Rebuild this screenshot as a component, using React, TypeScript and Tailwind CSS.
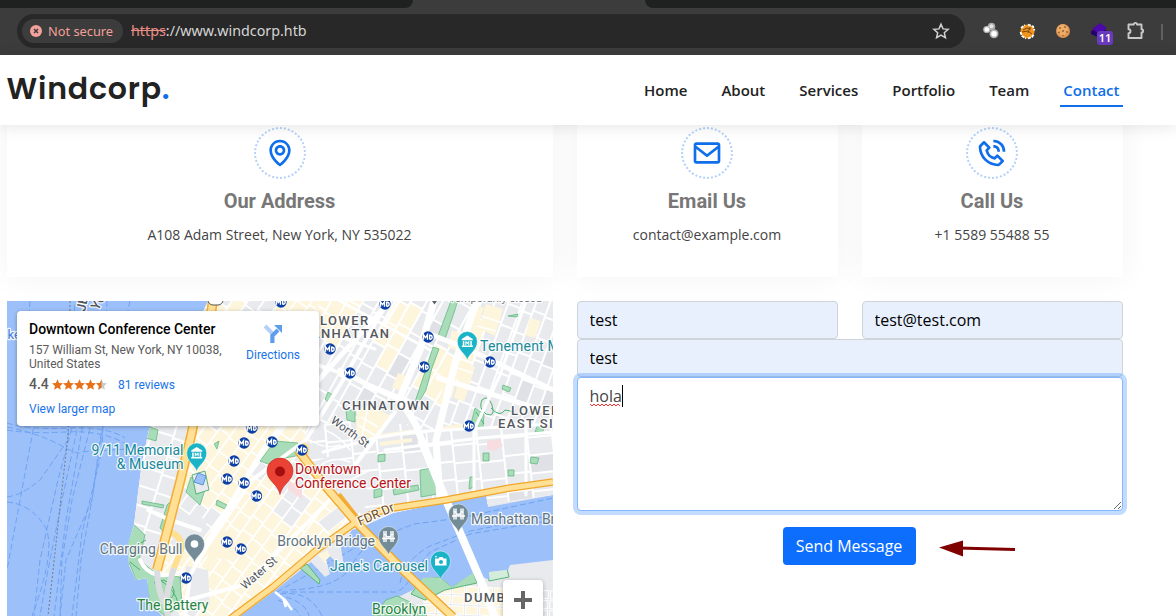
import React from "react";
import { BiEnvelope, BiMap, BiPhoneCall } from "react-icons/bi";

/* ---------- Browser toolbar ---------- */

function BrowserBar() {
  return (
    <div className="h-[55px] shrink-0 bg-[#3c3c3c]">
      <div className="flex h-2">
        <div className="w-[413px] rounded-br-lg bg-[#1f2020]" />
        <div className="w-[232px]" />
        <div className="flex-1 rounded-bl-lg bg-[#1f2020]" />
      </div>
      <div className="flex h-[47px] items-center pl-[17px]">
        <div className="mb-px flex h-[34px] w-[948px] items-center rounded-full bg-[#282828] pl-[5px] pr-[15px]">
          <div className="flex h-6 w-[101px] items-center rounded-full bg-[#3c3c3c] pl-2">
            <svg width="12" height="12" viewBox="0 0 12 12">
              <circle cx="6" cy="6" r="6" fill="#f2a29a" />
              <path d="M4 4l4 4M8 4l-4 4" stroke="#3c3c3c" strokeWidth="1.5" />
            </svg>
            <span className="ml-1.5 whitespace-nowrap pt-px font-['Noto_Sans',sans-serif] text-[12.800px] text-[#f0a098]">Not secure</span>
          </div>
          <div className="ml-2 flex-1 font-['Noto_Sans',sans-serif] text-[14.300px] text-[#d5d5d5]">
            <span className="text-[#e98d85] line-through">https</span>://www.windcorp.htb
          </div>
          <svg width="18" height="18" viewBox="0 0 24 24" fill="none" stroke="#d0d0d0" strokeWidth="2">
            <path d="M12 3l2.7 6.2 6.8.6-5.100 4.500 1.500 6.700L12 17.500 6.100 21l1.500-6.700L2.500 9.800l6.800-.6z" />
          </svg>
        </div>
        <svg className="mb-px ml-[17px]" width="18" height="18" viewBox="0 0 18 18">
          <circle cx="9.500" cy="4.500" r="3.800" fill="#a8a8a8" />
          <circle cx="4.800" cy="7.500" r="3.600" fill="#bdbdbd" />
          <circle cx="12" cy="11.800" r="4.500" fill="#b2b2b2" />
          <circle cx="9.500" cy="4.300" r="2" fill="#e5e5e5" />
          <circle cx="4.800" cy="7.500" r="2.300" fill="#fff" />
          <circle cx="12" cy="11.800" r="2.800" fill="#fff" />
        </svg>
        <svg className="mb-px ml-[19px]" width="17" height="17" viewBox="0 0 17 17">
          <circle cx="8.500" cy="8.500" r="7" fill="#ef941d" />
          <path d="M2 5l4-3M1.500 9l1.500 4 4 2.500M9 1.500l5 2 1.500 4M9 15.500l4-1.500 2-3" fill="none" stroke="#fff" strokeWidth="1.800" strokeDasharray="3 1" />
          <path d="M4 7l4-2 4 1M3 9l6-1 4 3M11 4l-2 6" fill="none" stroke="#7a450f" strokeWidth="1" />
        </svg>
        <svg className="mb-px ml-[19px]" width="16" height="16" viewBox="0 0 16 16">
          <circle cx="8" cy="8" r="7" fill="#dd9550" />
          <circle cx="7.500" cy="7" r="5.700" fill="#ecab66" />
          <g fill="#96602f">
            <circle cx="5" cy="5" r=".9" /><circle cx="10" cy="4" r=".9" /><circle cx="8" cy="8" r="1" />
            <circle cx="4" cy="9.500" r=".9" /><circle cx="12" cy="9" r=".9" /><circle cx="8" cy="12.500" r=".8" />
          </g>
        </svg>
        <div className="relative mb-px ml-5 size-5">
          <svg width="20" height="20" viewBox="0 0 20 20">
            <path d="M0 10l9-5 7 5-7 7-9-4z" fill="#250069" />
            <path d="M1 8l8-6 7 5-7 6z" fill="#4c08a8" />
          </svg>
          <span className="absolute left-[6px] top-[10px] flex h-[14px] w-4 items-center justify-center rounded-[3px] bg-[#693abb] font-['Noto_Sans',sans-serif] text-[11px] font-semibold text-white">11</span>
        </div>
        <svg className="mb-px ml-[15px]" width="20" height="20" viewBox="0 0 20 20" fill="none" stroke="#c9c9c9" strokeWidth="1.900" strokeLinejoin="round">
          <path d="M2.500 3.500h5.300a1.600 1.600 0 013.200 0h4.500v4.800a1.600 1.600 0 010 3.200v5.500h-13v-4.800a2 2 0 000-4z" />
        </svg>
        <div className="ml-[15px] h-4 w-0.5 bg-[#606060]" />
      </div>
    </div>
  );
}

/* ---------- Site header ---------- */

const links = ["Home", "About", "Services", "Portfolio", "Team", "Contact"];

function Header() {
  return (
    <header className="relative z-10 flex h-[70px] shrink-0 items-center justify-between bg-white pl-[6.500px] pr-[53.500px] shadow-[0_2px_15px_rgba(0,0,0,0.1)]">
      <div className="flex h-[70px] items-center pb-[3px] font-[Poppins,Inter,sans-serif] text-[30px] font-semibold tracking-[0.8px] text-[#222]">
        Windcorp<span className="text-[#106eea]">.</span>
      </div>
      <nav className="mt-0.5 flex gap-7 font-['Open_Sans',sans-serif] text-[15px] font-semibold text-[#222]">
        {links.map((l) => (
          <a key={l} className={l === "Contact" ? "flex h-[31px] items-center border-b-2 border-[#106eea] px-[3px] text-[#106eea]" : "flex h-[31px] items-center border-b-2 border-transparent px-[3px]"}>
            {l}
          </a>
        ))}
      </nav>
    </header>
  );
}

/* ---------- Info cards ---------- */

function InfoCard({ icon, title, text }: { icon: React.ReactNode; title: string; text: string }) {
  return (
    <div className="flex h-[172px] flex-col items-center bg-white pt-[22px] pr-px shadow-[0_0_30px_rgba(0,0,0,0.05)]">
      <div className="flex size-[52px] shrink-0 items-center justify-center rounded-full border-2 border-dotted border-[#b3d1fa] text-[32px] text-[#106eea]">
        {icon}
      </div>
      <h3 className="mt-[10px] font-[Roboto,sans-serif] text-[20px] font-bold leading-6 text-[#777]">{title}</h3>
      <p className="mt-[11px] font-['Open_Sans',sans-serif] text-[14px] leading-[21px] text-[#444]">{text}</p>
    </div>
  );
}

/* ---------- Map ---------- */

function rnd(a: number, b: number) {
  const v = Math.sin(a * 127.1 + b * 311.7) * 43758.5453;
  return v - Math.floor(v);
}

type GridProps = { clip: string; cx: number; cy: number; angle: number; w: number; h: number; bw: number; bh: number; gap: number; cream: number };

function Blocks({ clip, cx, cy, angle, w, h, bw, bh, gap, cream }: GridProps) {
  const out: React.ReactNode[] = [];
  const nx = Math.ceil(w / bw);
  const ny = Math.ceil(h / bh);
  for (let i = 0; i < nx; i++) {
    for (let j = 0; j < ny; j++) {
      const c = rnd(Math.floor(i / 2) + cx, Math.floor(j / 3) + cy) < cream;
      const fill = c ? (rnd(i, j) < 0.85 ? "#fdf5dc" : "#e8eaed") : rnd(j + 3, i) < 0.06 ? "#dfe1e6" : "#e8eaed";
      out.push(
        <rect key={`${i}-${j}`} x={cx - w / 2 + i * bw} y={cy - h / 2 + j * bh + (i % 3) * 2} width={bw - gap} height={bh - gap} fill={fill} />
      );
    }
  }
  return (
    <g clipPath={`url(#${clip})`}>
      <rect x="0" y="290" width="560" height="330" fill="#fff" />
      <g transform={`rotate(${angle} ${cx} ${cy})`}>{out}</g>
    </g>
  );
}

const subways: [number, number][] = [
  [281, 302], [385, 304], [428, 337], [330, 349], [350, 373], [424, 367], [490, 362], [469, 426], [272, 442], [302, 450],
  [252, 428], [244, 443], [234, 461], [227, 479], [244, 483], [256.5, 496], [227, 542], [241, 549], [186, 578],
];

function Pin({ x, y, color, kind }: { x: number; y: number; color: string; kind: string }) {
  return (
    <g transform={`translate(${x} ${y})`}>
      <path d="M0 18.500C-1.500 12-10 9-10 0a10 10 0 0120 0C10 9 1.500 12 0 18.500z" fill={color} stroke="#fff" strokeOpacity=".55" strokeWidth=".8" />
      {kind === "dot" && <circle r="3.800" fill="#fff" />}
      {kind === "museum" && <path d="M-5.500-2.500L0-6l5.500 3.500v1.300H-5.500zM-4.500-.5h1.500V4h-1.500zM3-.5h1.500V4H3zM-5.500 4h11v1.500h-11zM-2 3.500V-.3h.9L0 1l1.100-1.300H2v3.800H1V1.600L0 2.700-1 1.600v1.900z" fill="#fff" />}
      {kind === "bridge" && <path d="M-4.500-5.500v11M-2.500-5.500v11M2.500-5.500v11M4.500-5.500v11M-6.500 2h13M-4.500-2h2M2.500-2h2M-2.500-1Q0 2 2.500-1" stroke="#fff" strokeWidth="1.400" fill="none" />}
      {kind === "camera" && (
        <>
          <path d="M-5.500-2.500H-2L-1-4h3l1 1.500h3v7h-11.500z" fill="#fff" />
          <circle cx=".5" cy=".9" r="2" fill={color} />
          <path d="M-5.500-4.300h2" stroke="#fff" />
        </>
      )}
    </g>
  );
}

function Label({ x, y, color, size = 14, anchor = "start", spacing = 0, rotate = 0, bold, children }: {
  x: number; y: number; color: string; size?: number; anchor?: "start" | "end"; spacing?: number; rotate?: number; bold?: boolean; children: string;
}) {
  return (
    <text x={x} y={y} fill={color} fontSize={size} textAnchor={anchor} letterSpacing={spacing} fontWeight={bold ? 500 : 400}
      transform={`rotate(${rotate} ${x} ${y})`} stroke="#fff" strokeWidth="2.500" strokeOpacity=".85" strokeLinejoin="round" paintOrder="stroke">
      {children}
    </text>
  );
}

const LAND = "M208 301H553V495L488 507 486 494 393 513 360 528 352 530 341 548 344 566 336 562 330 556 326 560 330 574 325 577 311 562 273 592 240 616H162L150 603 147 578 136 580 129 565 128 545 134 525 142 462 149 430Z";
const BROOKLYN = "M378 616L392 600 413 590 423 578 440 577 452 587 473 573 490 580 489 572 508 570 510 565 553 560V616Z";
const FDR = "M226 622L273 587 318 549 356 522Q372 512 393 508L446 500 510 488 553 482";
const BRIDGE = "M298 450L326 487 356 522 406 573 453 617";
const WEST = "M213 300L203 370 192 432 180 482 167 532 157 570";

function MapArt() {
  return (
    <svg className="block" width="546" height="315" viewBox="7 301 546 315" fontFamily="Roboto, sans-serif">
      <defs>
        <clipPath id="land"><path d={LAND} /></clipPath>
        <clipPath id="bk"><path d={BROOKLYN} /></clipPath>
        <clipPath id="rw"><path d="M120 301H213L192 430 167 530 157 575 140 590 120 590Z" /></clipPath>
        <clipPath id="ra"><path d="M213 301H319V430L303 457 356 522 233 616H180L157 575 192 430Z" /></clipPath>
        <clipPath id="rb"><path d="M319 301H476L436 440H410L390 400 303 457Z" /></clipPath>
        <clipPath id="rc"><path d="M476 301H553V424L436 436Z" /></clipPath>
        <clipPath id="rd"><path d="M303 457L318 427 390 400 412 432 553 424V495L356 522Z" /></clipPath>
      </defs>
      <rect x="7" y="301" width="546" height="315" fill="#9cc0f9" />

      <g fill="none" stroke="#6fa3f3" strokeWidth="1" strokeDasharray="6 3">
        <path d="M30 301L20 420M35 420L7 570M7 497Q22 495 40 480L68 440 75 301M7 502Q30 504 44 525T32 616" />
        <path d="M74 420L58 480 40 560 34 616M77 430L62 500 48 570 40 616M86 301L82 430 66 520 54 616M92 420L72 500 62 560 60 616" />
        <path d="M104 420L92 500 66 560 60 616M107 301L102 450 82 533 72 616M130 301L100 440 92 500 81 560 76 616" />
        <path d="M7 423Q30 430 68 428T125 438M7 430Q30 434 66 432T126 444M7 427Q40 434 60 445T80 452L128 449" />
        <path d="M277 592L360 545 414 524 460 518 553 498M282 592H395Q405 590 412 575L430 552 470 534 553 520M290 590Q340 588 352 565T388 535M400 583Q405 560 430 546L470 531 553 515M280 594Q310 590 322 616M286 597Q306 603 309 616M278 600Q298 608 300 616" />
      </g>
      <path d="M70 301L68 435 60 507 48 616" fill="none" stroke="#70819b" strokeWidth="1.100" strokeDasharray="2 2" />

      <path d={LAND} fill="#e8eaed" />
      <g clipPath="url(#land)">
        <Blocks clip="rw" cx={160} cy={450} angle={17} w={200} h={340} bw={22} bh={19} gap={2} cream={0.3} />
        <Blocks clip="ra" cx={250} cy={480} angle={36} w={420} h={420} bw={13} bh={17} gap={1.7} cream={0.78} />
        <Blocks clip="rb" cx={390} cy={370} angle={29} w={280} h={280} bw={14} bh={24} gap={2} cream={0.14} />
        <Blocks clip="rc" cx={500} cy={370} angle={20} w={210} h={220} bw={13} bh={22} gap={2} cream={0.14} />
        <Blocks clip="rd" cx={430} cy={460} angle={-6} w={300} h={170} bw={25} bh={18} gap={2} cream={0} />
        <g fill="#e8eaed">
          <path d="M177 512L208 520 196 548 172 538ZM186 566L208 570 210 605 186 610ZM310 463L334 455 358 470 372 500 356 516 330 482ZM398 402L410 410 412 424 390 424Z" />
          <path d="M318 522L340 505 350 514 328 532Z" stroke="#fff" />
        </g>
        <g fill="#fdf5dc">
          <path d="M357 409L372 404 390 416 376 440 356 434ZM398 373L411 378 405 392 392 388ZM450 358L461 361 452 398 441 392ZM463 362L475 367 464 402 454 398Z" />
          <path d="M380 434L416 429V433L380 438ZM380 442L412 438V442L380 446ZM440 427L466 423V428L440 432ZM473 304L484 308 475 332 464 327ZM486 304L503 309 495 336 479 328ZM452 330L462 334 458 352 448 346ZM530 318L541 321 535 338 525 335Z" />
          <path d="M207 534L232 530 236 548 226 560 206 555ZM318 555L327 550 340 573 336 576Z" />
        </g>
        <path d="M361 417L378 427M358 425L376 436M368 407L362 436M461 334L472 338M456 350L468 354M452 366L473 373M448 380L469 387M481 316L500 322M477 326L496 331" stroke="#fff" strokeWidth="1.500" />
        <g fill="#a9dcb8" stroke="#58b37a" strokeWidth=".7">
          <path d="M451 301H458L445 339 438 336ZM433 347L439 349 432 368 426 390 418 404 415 402 423 378Z" />
          <path d="M346 410H355V422L347 420ZM275 441L298 443 301 455 285 458 268 464 260 461ZM328 392L334 396 328 402 325 399ZM317 416L323 414 317 424Z" />
          <path d="M475 408L484 414 483 428 471 424ZM420 470L432 468 438 494 421 497ZM538 424L544 425 543 432 535 432ZM378 455L385 454V461L378 462Z" />
          <path d="M148 426L158 430 156 441 146 438ZM167 505L172 500 164 532 160 528ZM142 501L164 505 163 508 142 504ZM374 490L382 488V496L374 498ZM393 489L418 485 419 490 394 495ZM191 477L205 490 200 505 186 492ZM217 500L227 505 225 509 216 505Z" />
          <path d="M133 524L145 535 139 560 157 574 180 577 182 605 165 616 150 604 147 582 136 580 128 560 128 545Z" />
          <path d="M508 316L518 314 517 317 508 316ZM503 385L511 388 509 392 502 389ZM483 453H489V461H483ZM508 470H514V476H508ZM531 457L539 458 537 464 530 463ZM470 477H474V487L469 489ZM214 444L219 441 217 449Z" />
        </g>
        <path d="M132 548L146 540M130 562L140 570M154 583Q164 576 172 586T160 606M160 580Q176 590 178 604M482 400Q488 394 492 405 496 418 486 414 478 408 482 400M491 408Q500 418 505 410L515 412M476 412L484 424" fill="none" stroke="#4fb074" strokeWidth="1" />
        <path d="M192 475L205 471 209 490 196 494Z" fill="#e8eaed" stroke="#58b37a" />
        <path d="M198 473L206 476 203 485 194 482Z" fill="#9cc0f9" stroke="#5b91cf" />
        <path d="M487 441L500 439 503 446 494 451 487 449ZM288 480L302 488 302 499 288 490Z" fill="#f7dde0" />
      </g>

      <g fill="none" stroke="#fff" strokeLinecap="round" strokeLinejoin="round" clipPath="url(#land)">
        <path d="M195 562L224 515 263 450 306 394 390 301" strokeWidth="5" />
        <path d="M185 616L190 575 206 548 252 480 306 440 340 385 388 301" strokeWidth="4" />
        <path d="M434 301L420 350 400 398 416 425 445 500" strokeWidth="7" />
        <path d="M477 301L456 360 436 440 440 500" strokeWidth="7" />
        <path d="M430 334L470 350 553 390M340 370L370 386 400 400M438 378L553 413" strokeWidth="5" />
        <path d="M160 575Q172 576 183 572M188 600L243 585 285 545 330 500M148 510L170 520 200 530M140 560Q145 572 158 575M355 465L395 412" strokeWidth="4" />
        <path d="M323 452L375 438 410 432 553 424M385 450L480 438 553 432M526 301L500 375 474 430V500" strokeWidth="3" />
        <path d="M320 330L375 349M319 365L350 377 420 405M340 301L430 350M399 301L385 325M526 420V495" strokeWidth="3" />
        <path d="M310 440Q325 450 340 445M325 430Q340 436 350 450M318 468Q330 455 350 462M340 485L370 470" strokeWidth="1.500" />
      </g>

      <path d={BROOKLYN} fill="#e8eaed" />
      <g clipPath="url(#bk)">
        <g transform="rotate(3 440 600)">
          {[0, 1, 2, 3, 4, 5, 6, 7, 8, 9].map((i) =>
            [0, 1, 2, 3].map((j) => <rect key={`${i}.${j}`} x={424 + i * 14} y={585 + j * 10} width="12" height="8" fill={i < 6 || j > 2 ? "#fdf5dc" : "#e8eaed"} stroke="#fff" />)
          )}
        </g>
        <path d="M375 616L398 596 413 607 425 616ZM411 594L423 577 440 577 452 587 473 572 477 583 445 590 425 600Z" fill="#a9dcb8" stroke="#58b37a" />
        <path d="M486 572L507 568 509 577 489 581Z" fill="#d4edda" stroke="#58b37a" />
      </g>
      <path d="M373 616L386 600 397 596 410 602 427 616Z" fill="#a9dcb8" stroke="#58b37a" strokeWidth=".7" />
      <path d="M300 568L307 564 320 580 319 584Z" fill="#a9dcb8" stroke="#58b37a" />
      <path d="M275 592L285 600 292 610M283 598L286 607" stroke="#fff" strokeWidth="2.500" fill="none" />
      <path d="M421 440L446 500 486 593 495 618" fill="none" stroke="#fff" strokeWidth="8" />

      <g fill="none" strokeLinejoin="round">
        <path d="M157 570Q158 590 163 600T168 618M174 568Q170 580 168 590T168 600" stroke="#dcdde0" strokeWidth="6" />
        <path d="M168 532Q183 535 181 550L174 568" stroke="#ffdf91" strokeWidth="6" />
        <path d={WEST} stroke="#f4ae35" strokeWidth="10" />
        <path d={WEST} stroke="#ffe094" strokeWidth="7" />
        <path d="M302 462Q312 450 306 445T301 461" stroke="#ffdf91" strokeWidth="2.500" />
        <path d="M339 494L357 517" stroke="#f4ae35" strokeWidth="4" />
        <path d={FDR} stroke="#f0a62a" strokeWidth="7.500" />
        <path d={BRIDGE} stroke="#f0a62a" strokeWidth="9" />
        <path d={FDR} stroke="#ffe094" strokeWidth="5" />
        <path d={BRIDGE} stroke="#ffe094" strokeWidth="6.500" />
      </g>

      <rect x="208" y="294" width="15" height="11" rx="5" fill="#fff" stroke="#555" />
      {subways.map(([x, y]) => (
        <g key={`${x},${y}`}>
          <circle cx={x} cy={y} r="5.700" fill="#0b3fa5" />
          <path d={`M${x - 4.500} ${y + 2.8}v-5l2 2.800 2-2.800v5M${x + 1.700} ${y + 2.400}v-4.200h.8q1.700 .3 1.700 2t-1.700 2h-.8`} stroke="#fff" strokeWidth="1.400" fill="none" />
        </g>
      ))}

      <Label x={183.5} y={455} anchor="end" color="#16899a">9/11 Memorial</Label>
      <Label x={183.5} y={469} anchor="end" color="#16899a">&amp; Museum</Label>
      <Label x={480} y={351} color="#16899a" spacing={0.2}>Tenement M</Label>
      <Label x={182.5} y={554} anchor="end" color="#607481">Charging Bull</Label>
      <Label x={375} y={546} anchor="end" color="#607481">Brooklyn Bridge</Label>
      <Label x={471} y={524} color="#607481">Manhattan Br</Label>
      <Label x={428} y={571} anchor="end" color="#16899a">Jane's Carousel</Label>
      <Label x={137} y={610} color="#25853f">The Battery</Label>
      <Label x={372} y={614} color="#25853f">Brooklyn</Label>
      <Label x={464} y={602} size={13} spacing={1.4} bold color="#54585d">DUMB</Label>
      <Label x={320} y={325} size={13} spacing={1.4} bold color="#54585d">LOWER</Label>
      <Label x={298} y={338} size={13} spacing={1.4} bold color="#54585d">MANHATTAN</Label>
      <Label x={342} y={410} size={13} spacing={1.4} bold color="#54585d">CHINATOWN</Label>
      <Label x={511} y={415} size={13} spacing={1.4} bold color="#54585d">LOWER</Label>
      <Label x={498} y={428} size={13} spacing={1.4} bold color="#54585d">EAST SI</Label>
      <Label x={330} y={422} size={11.5} rotate={36} color="#505459">Worth St</Label>
      <Label x={245} y={590} size={11.5} rotate={-41} color="#505459">Water St</Label>
      <Label x={360} y={526} size={12.5} rotate={-24} color="#6d4a1c">FDR Dr</Label>
      <Label x={449} y={302} size={11} color="#70757a">Temporarily closed</Label>
      <Label x={7.5} y={339} size={13} color="#3f7ddb">ke</Label>
      <Label x={85} y={312} size={13} rotate={-78} bold color="#505459">JERSEY</Label>
      <Label x={98} y={311} size={13} rotate={-60} bold color="#505459">YORK</Label>
      <path d="M432 301h5l-2.500 3.500z" fill="#596269" />

      <Pin x={196.7} y={453} color="#1ab3c8" kind="museum" />
      <Pin x={467.3} y={341.5} color="#1ab3c8" kind="museum" />
      <Pin x={194.5} y={544} color="#738c98" kind="dot" />
      <Pin x={388.5} y={536.5} color="#738c98" kind="bridge" />
      <Pin x={458.5} y={514} color="#738c98" kind="bridge" />
      <Pin x={440.5} y={561} color="#1ab3c8" kind="camera" />

      <path d="M280 494.500C278 484 267 481 267 471a13 13 0 0126 0C293 481 282 484 280 494.500z" fill="#ea4335" stroke="#c5221f" strokeWidth=".6" />
      <circle cx="280" cy="471.500" r="5" fill="#a50e0e" />
      <Label x={295} y={474} color="#b91218">Downtown</Label>
      <Label x={295} y={488} color="#b91218">Conference Center</Label>
    </svg>
  );
}

function Star({ half }: { half?: boolean }) {
  const d = "M5.500.3l1.600 3.600 3.900.4-2.900 2.600.8 3.900-3.400-2-3.400 2 .8-3.900L0 4.300l3.900-.4z";
  return (
    <svg width="11" height="11" viewBox="0 0 11 11">
      <path d={d} fill={half ? "#c9c9c9" : "#e7711b"} />
      {half && <path d="M5.500.3L3.900 3.900 0 4.300l2.900 2.600-.8 3.900 3.400-2z" fill="#e7711b" />}
    </svg>
  );
}

function MapPanel() {
  return (
    <div className="relative h-[315px] overflow-hidden font-[Roboto,sans-serif]">
      <MapArt />
      <div className="absolute left-[10px] top-[10px] flex h-[115px] w-[302px] justify-between rounded-sm bg-white pl-3 pr-[19px] shadow-[0_1px_4px_rgba(0,0,0,0.3)]">
        <div>
          <div className="mt-2.5 whitespace-nowrap text-[14px] font-medium leading-4 text-black">Downtown Conference Center</div>
          <div className="mt-[6px] whitespace-nowrap text-[12px] leading-[14px] text-[#5b5b5b]">
            157 William St, New York, NY 10038,
            <br />
            United States
          </div>
          <div className="mt-[5px] flex h-4 items-center">
            <span className="w-[23px] text-[14px] font-medium text-[#5b5b5b]">4.4</span>
            <Star /><Star /><Star /><Star /><Star half />
            <span className="ml-[11px] pt-px text-[12px] text-[#1a73e8]">81 reviews</span>
          </div>
          <div className="mt-[9px] text-[12px] leading-4 text-[#1a73e8]">View larger map</div>
        </div>
        <div className="flex flex-col items-center pt-[13px]">
          <svg width="20" height="20" viewBox="0 0 20 20">
            <path d="M2 2l7 7v10" fill="none" stroke="#b3d1f8" strokeWidth="4" />
            <path d="M9.500 19v-7.500L15 6" fill="none" stroke="#5f9cec" strokeWidth="4" />
            <path d="M11 1h8v8z" fill="#5f9cec" />
          </svg>
          <div className="mt-[3px] text-[12px] leading-4 text-[#1a73e8]">Directions</div>
        </div>
      </div>
      <div className="absolute left-[496px] top-[279px] flex size-10 items-center justify-center rounded-sm bg-white shadow-[0_1px_4px_rgba(0,0,0,0.3)]">
        <svg width="18" height="18" viewBox="0 0 18 18"><path d="M0 9h18M9 0v18" stroke="#666" strokeWidth="4" /></svg>
      </div>
    </div>
  );
}

/* ---------- Contact form ---------- */

const field = "block h-[38px] w-full min-w-0 rounded border border-[#ced4da] bg-[#e8f0fe] pl-[11.500px] pr-3 text-[16px] text-black outline-none";

function ContactForm() {
  return (
    <form className="font-['Open_Sans',sans-serif]">
      <div className="grid grid-cols-2 gap-6">
        <input className={field} defaultValue="test" />
        <input className={field} defaultValue="test@test.com" />
      </div>
      <input className={field} defaultValue="test" />
      <div className="relative">
        <textarea
          className="block h-[134px] w-full resize rounded border border-[#86b7fe] bg-white py-1.5 pl-[11.500px] pr-3 text-[16px] leading-6 text-[#444] shadow-[0_0_0_4px_rgba(13,110,253,0.25)] outline-none"
          spellCheck={false}
          defaultValue="hola"
        />
        <svg className="absolute left-[13px] top-[26px]" width="33" height="4" viewBox="0 0 33 4" fill="none">
          <path d="M0 1l2 2 2-2 2 2 2-2 2 2 2-2 2 2 2-2 2 2 2-2 2 2 2-2 2 2 2-2 2 2" stroke="#f33" strokeWidth="1" />
        </svg>
        <div className="absolute left-[45px] top-2 h-[22px] w-px bg-black" />
      </div>
      <div className="flex items-center pl-[206px] pt-4">
        <button type="button" className="h-[38px] w-[133px] rounded bg-[#0d6efd] pr-px text-[16px] text-white">Send Message</button>
        <svg className="ml-[22px] mt-1" width="80" height="20" viewBox="0 0 80 20">
          <path d="M20 10L77 11.500" stroke="#800000" strokeWidth="3" />
          <path d="M1 9.500L25 2.500v16z" fill="#800000" />
        </svg>
      </div>
    </form>
  );
}

export default function App() {
  return (
    <div className="flex h-[616px] w-[1176px] flex-col overflow-hidden bg-white">
      <BrowserBar />
      <Header />
      <main className="-mt-5 w-[1130px] shrink-0 pl-[7px] pr-[7px]">
        <div className="grid grid-cols-[546px_261px_261px] gap-6">
          <InfoCard icon={<BiMap />} title="Our Address" text="A108 Adam Street, New York, NY 535022" />
          <InfoCard icon={<BiEnvelope />} title="Email Us" text="contact@example.com" />
          <InfoCard icon={<BiPhoneCall />} title="Call Us" text="+1 5589 55488 55" />
        </div>
        <div className="mt-6 grid grid-cols-[546px_546px] gap-6">
          <MapPanel />
          <ContactForm />
        </div>
      </main>
    </div>
  );
}
